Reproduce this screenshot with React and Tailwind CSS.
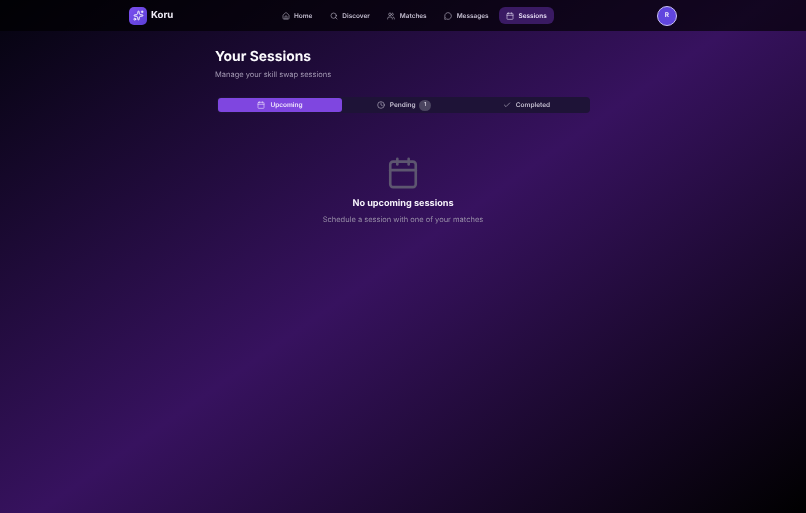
import { Calendar, Check, Clock, Home, MessageCircle, Search, Sparkles, Users } from 'lucide-react'

const navItems = [
  { label: 'Home', icon: Home },
  { label: 'Discover', icon: Search },
  { label: 'Matches', icon: Users },
  { label: 'Messages', icon: MessageCircle },
  { label: 'Sessions', icon: Calendar, active: true },
]

export default function App() {
  return (
    <div className="h-[513px] overflow-hidden bg-[linear-gradient(145deg,#04030e_0%,#37125f_50%,#000000_100%)] font-['Inter',sans-serif] text-white [text-rendering:geometricPrecision]">
      {/* Top nav */}
      <header className="h-[31px] bg-black/65 flex items-center pl-[129px] pr-[129px] will-change-transform">
        <div className="flex items-center gap-1 w-[145px]">
          <div className="w-[18px] h-[18px] rounded-[5px] bg-gradient-to-br from-[#7c4ff0] to-[#5b3fd6] flex items-center justify-center">
            <Sparkles className="w-[11px] h-[11px] text-white" strokeWidth={2} />
          </div>
          <span className="pt-[2px] text-[9.6px] font-bold text-[#f1eef8]">Koru</span>
        </div>

        <nav className="flex items-center gap-[2.5px]">
          {navItems.map((item) => (
            <div
              key={item.label}
              className={`flex items-center gap-[4.5px] h-[17px] px-[7.5px] rounded-[6px] text-[6.45px] leading-[17px] font-semibold ${
                item.active ? 'bg-[#3a1a63] text-[#e6dcf5]' : 'text-[#c3bdcf]'
              }`}
            >
              <item.icon className="w-[8px] h-[8px]" strokeWidth={1.75} />
              <span className="pt-px">{item.label}</span>
            </div>
          ))}
        </nav>

        <div className="ml-auto w-[20px] h-[20px] rounded-full bg-[#6045de] border border-[#c9c0f2] flex items-center justify-center text-[6.5px] font-bold text-[#ece8fb]">
          R
        </div>
      </header>

      <main className="w-[376px] ml-[215px] pt-[17px] will-change-transform">
        <h1 className="text-[13.85px] leading-[18px] font-bold text-[#fbfafd]">Your Sessions</h1>
        <p className="mt-[3px] text-[7.5px] leading-[12px] text-[#a398b3]">Manage your skill swap sessions</p>

        {/* Tabs */}
        <div className="mt-[16px] ml-[2px] w-[373px] h-[16px] rounded-[4px] bg-[#1e1337] flex items-center">
          <div className="w-[124px] h-[14px] ml-px rounded-[3px] bg-[#7f46e0] flex items-center justify-center gap-[5px] text-[6.5px] font-semibold text-[#f0e6fc]">
            <Calendar className="w-[8px] h-[8px]" strokeWidth={1.75} />
            <span className="pt-px">Upcoming</span>
          </div>
          <div className="w-[124px] flex items-center justify-center gap-[5px] text-[6.5px] font-semibold text-[#c3bdcf]">
            <Clock className="w-[8px] h-[8px]" strokeWidth={1.75} />
            <span className="pt-px">Pending</span>
            <span className="-ml-[1.5px] w-[12px] h-[11px] rounded-full bg-[#4b4560] flex items-center justify-center text-[5.5px] text-[#d8d3e2]">1</span>
          </div>
          <div className="w-[121px] flex items-center justify-center gap-[5px] text-[6.5px] font-semibold text-[#c3bdcf]">
            <Check className="w-[8px] h-[8px]" strokeWidth={1.75} />
            <span className="pt-px">Completed</span>
          </div>
        </div>

        {/* Empty state */}
        <div className="mt-[43px] flex flex-col items-center">
          <Calendar className="w-[34px] h-[34px] text-[#5d5670]" strokeWidth={1.85} />
          <h2 className="mt-[7px] text-[9.15px] leading-[14px] font-bold text-[#f5f2fa]">No upcoming sessions</h2>
          <p className="mt-[3px] text-[7.5px] leading-[12px] text-[#978da7]">Schedule a session with one of your matches</p>
        </div>
      </main>
    </div>
  )
}
